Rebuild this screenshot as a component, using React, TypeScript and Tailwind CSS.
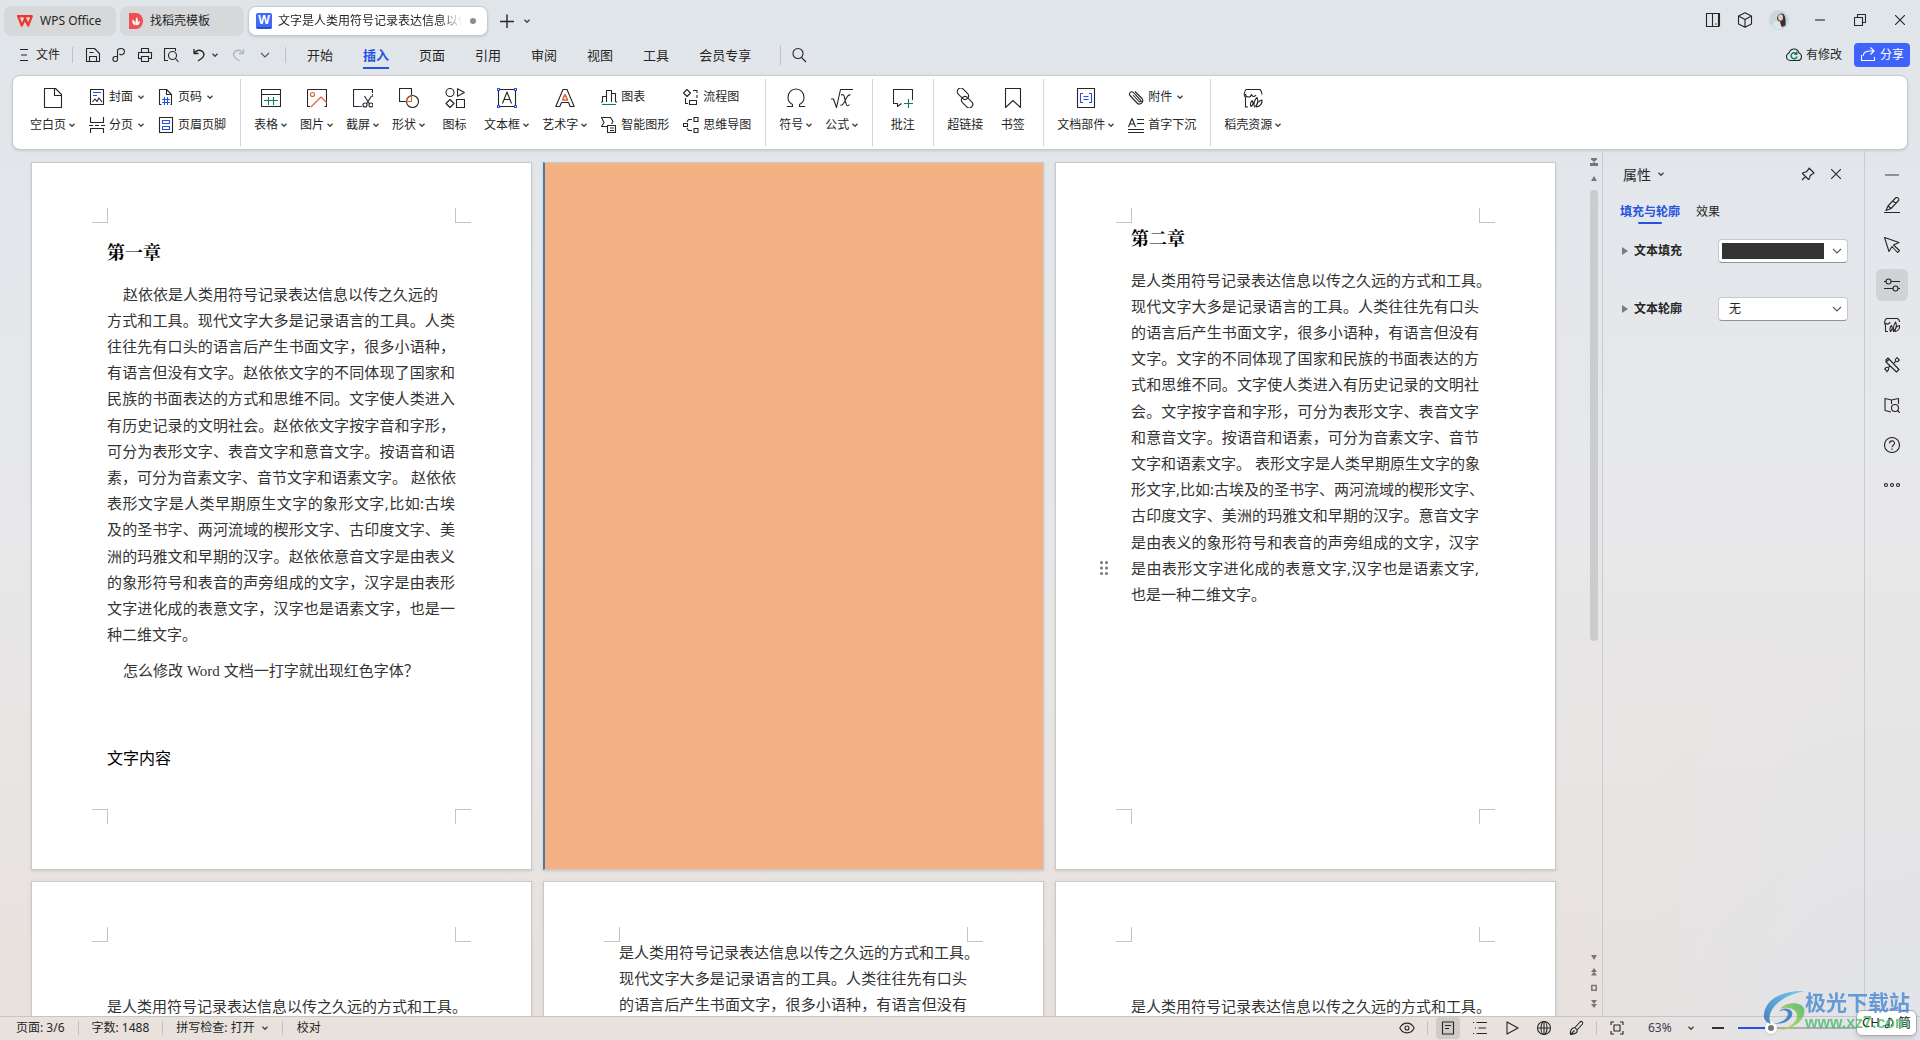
import type { ReactNode } from 'react';

type IconProps = { children: ReactNode; size?: number; className?: string };

// pixel-aligned 1px line icons, drawn on a 20 or 16 grid
function Icon({ children, size = 20, className = '' }: IconProps) {
  return (
    <svg
      width={size}
      height={size}
      viewBox={`0 0 ${size} ${size}`}
      fill="none"
      stroke="currentColor"
      strokeWidth="1.1"
      strokeLinejoin="round"
      className={`shrink-0 ${className}`}
      aria-hidden="true"
    >
      {children}
    </svg>
  );
}

function Caret({ className = '' }: { className?: string }) {
  return (
    <svg width="6" height="6" viewBox="0 0 6 6" fill="none" stroke="#444" strokeWidth="1.4" className={`shrink-0 ${className}`} aria-hidden="true">
      <path d="M0.5 1.8 3 4.2 5.5 1.8" />
    </svg>
  );
}

function Chevron() {
  return (
    <svg width="10" height="6" viewBox="0 0 10 6" fill="none" stroke="#555" strokeWidth="1.1" className="shrink-0" aria-hidden="true">
      <path d="M1 1 5 5 9 1" />
    </svg>
  );
}

const blue = '#2453e0';
const orange = '#d8622a';
const green = '#0f7b5a';

const icons = {
  blank: <Icon><path d="M1.5.5h11l6 6v13h-17zM11.5.5v7h7" /></Icon>,
  table: <Icon><path d="M.5 1.5h19v17H.5zM.5 6.5h19" /><path stroke={green} d="M3 12.5h14M7.5 9v8M12.5 9v8" /></Icon>,
  picture: <Icon><path d="M.5 1.5h19v17h-2M3 18.5H.5v-17" /><path stroke={orange} d="m4 19 10-10 6 6" /><circle stroke={orange} cx="5.5" cy="6.5" r="2" /></Icon>,
  screenshot: <Icon><path d="M6 18.5H.5v-17h19V5" /><path stroke={blue} d="M19.5 6v3M6 18.5h3" /><path d="m11.5 8 5 8M18.5 8l-5 8" /><circle cx="12" cy="17" r="2" /><circle cx="18" cy="17" r="2" /></Icon>,
  shape: <Icon><path d="M7 13.5H.5v-13h12V7" /><circle cx="13.5" cy="13.5" r="6" /><path stroke={orange} d="M7.5 13.5h5V7.500c-3 .3-5 3-5 6z" /></Icon>,
  glyphs: <Icon><circle cx="5" cy="4.500" r="4" /><path d="M12.500.8v7.400L19.300 4.500zM5 11.500l4 4-4 4-4-4zM11.500 11.500h8v8h-8z" /></Icon>,
  textbox: <Icon><path d="M3 1.500h14M3 18.500h14M1.500 3v14M18.500 3v14M5.500 15.500 10 4l4.500 11.500M7.200 11.500h5.600" /><g stroke={blue} fill="#fff"><rect x=".5" y=".5" width="2" height="2" /><rect x="17.500" y=".5" width="2" height="2" /><rect x=".5" y="17.500" width="2" height="2" /><rect x="17.500" y="17.500" width="2" height="2" /></g></Icon>,
  wordart: <Icon><path d="M.8 18.500 8 1.500h4l7.200 17h-4L13.500 14.500h-7L4.800 18.500z" /><path stroke={orange} strokeWidth="1.500" d="M10 6.500 12.500 12h-5z" /></Icon>,
  omega: <Icon><path d="M1 18.500h5.500v-2C3.500 15 2 12.500 2 9.500c0-5 3.500-8.500 8-8.500s8 3.500 8 8.500c0 3-1.500 5.500-4.500 7v2H19" /></Icon>,
  formula: <Icon size={24}><path d="M1 13h2.500l3 8.500 4-18H23" /><path d="M11 9c2-1 3 0 3.500 2.500l1.500 6c.5 2.500 2 3 3.500 1M20.500 9c-1.500-.5-2.500.5-3.500 2l-3.500 6.500c-1 1.500-2 2-3 1.500" /></Icon>,
  comment: <Icon><path d="M19.500 12V1.500h-19v14h4v3l4-3" /><path stroke={green} d="M11 15.500h9M15.500 11v9" /></Icon>,
  link: <Icon><g transform="rotate(45 10 10)"><rect x="-1" y="5" width="13" height="7" rx="3.500" /><rect x="8" y="8" width="13" height="7" rx="3.500" /></g></Icon>,
  bookmark: <Icon><path d="M2.500.5h15v19L10 12.500l-7.500 7z" /></Icon>,
  parts: <Icon><path d="M1.500.5h17v19h-17z" /><path stroke={blue} d="M7 5.500H4.500v9H7M13 5.500h2.500v9H13M7.500 8.500h5M7.500 11.500h5" /></Icon>,
  resource: <Icon><path d="M5 19H2.500V9.500C.5 8 1 4 3 1.500h14c1.500 1.500 2 3.500 2 5M2.500 6c0 4 5 4 6 .5C9.500 9 12 9 13 7" /><path d="M8 18.500c-1-2-.5-4 1-6 1.500 2 1 4.500-1 6zM11.500 19c-1-3 0-7 2.500-9.500 1.500 3 .5 7-2.500 9.500zM13.500 19c0-3 2-6 5.500-7 .5 3.500-2 6.500-5.500 7z" /></Icon>,
  cover: <Icon size={16}><path d="M1.500.5h13v15h-13z" /><path stroke={blue} d="M4 3.500h8M4 6.500h4" /><path d="m3.500 13 2.500-3 2 2.500 2-3.500 3 4" /></Icon>,
  pageBreak: <Icon size={16}><path d="M1.500 0v5.500h13V0M0 8.500h4M6 8.500h4M12 8.500h4M1.500 16v-4.500h13V16" /></Icon>,
  pageNumber: <Icon size={16}><path d="M3.500 15.500h-2V.5h7l5 5v10h-1M8.500.5v5h5" /><path stroke={blue} d="M6.500 8v8M9.500 8v8M4 10.500h8M4 13.500h8" /></Icon>,
  headerFooter: <Icon size={16}><path d="M1.500.5h13v15h-13z" /><path stroke={blue} d="M4.500 3.500h7v3h-7zM4.500 9.500h7v3h-7z" /></Icon>,
  chart: <Icon size={16}><path d="M1.500 13V7.500h4V13M5.500 13V1.500h5V13M10.500 13V4.500h4V13M0 13h1.500M14.500 13H16" /><path stroke={green} d="M1 15.500h14" /></Icon>,
  smartArt: <Icon size={16}><path d="M6 9.500H.5L3 5.500.5.5h9l2.500 4-1.500 2.500M6.500 8.500h8v7h-8zM9 11h4M9 13.500h4" /></Icon>,
  flow: <Icon size={16}><path d="M4 .5 7.500 4 4 7.500.5 4zM10 1.500h4V4M14 6v3M6.500 11.500h7v4h-7zM2.500 9v5.500H5" /></Icon>,
  mindMap: <Icon size={16}><path d="M.5 6.500h4v3h-4zM11 .5h4v4h-4zM11 11.500h4v4h-4zM9 2.500H5.500L4 5M4 11l1.500 2.500H9" /></Icon>,
  attach: <Icon size={16}><path d="M14 13 5.500 3.500c-2.500-2-5 .5-3.500 3l7 7.500c3 3 7.500-1 5-4.500L7 2.500M5 6l6 6.500c1 .8 2.200-.2 1.500-1.500L7.500 5.500" /></Icon>,
  dropCap: <Icon size={16}><path d="M.5 10 4 1.500 7.500 10M2 7h4M9 2.500h7M9 6.500h7M0 12.500h16M0 15.500h16" /></Icon>,
};

type Big = { icon: ReactNode; label: string; caret?: boolean };

function BigButton({ icon, label, caret }: Big) {
  return (
    <button className="flex min-w-[33px] flex-col items-center gap-[9px]">
      <span className="flex h-5 items-center">{icon}</span>
      <span className="flex h-4 items-center gap-[3px]">
        {label}
        {caret && <Caret />}
      </span>
    </button>
  );
}

function SmallColumn({ items }: { items: Big[] }) {
  return (
    <div className="ml-px flex flex-col items-start gap-3">
      {items.map((item) => (
        <button key={item.label} className="flex h-4 items-center gap-1">
          {item.icon}
          {item.label}
          {item.caret && <Caret className="ml-px" />}
        </button>
      ))}
    </div>
  );
}

function Group({ children }: { children: ReactNode }) {
  return <div className="flex items-end gap-[13px] border-r border-[#d4d6d9] pr-[14px] pb-[13px] pl-[13px] first:pl-[17px] last:border-r-0">{children}</div>;
}

function Divider({ className = '' }: { className?: string }) {
  return <span className={`w-px shrink-0 bg-[#bfc3c8] ${className}`} />;
}

function TitleBar() {
  return (
    <header className="flex h-[41px] items-start pt-[6px]">
      <div className="flex gap-1 pl-1">
        <button className="flex h-[30px] w-28 items-center gap-[7px] rounded-lg bg-[#d6d8da] pl-[13px]">
          <svg width="16" height="12" viewBox="0 0 16 12" fill="none" stroke="#f0362c" strokeWidth="2.200" strokeLinejoin="round" aria-hidden="true">
            <path d="M0 1.200h6.500M1.200 1.200l3.600 9.300 3.200-6.500 3.200 6.500 3.600-9.300H7l3 6" />
          </svg>
          WPS Office
        </button>
        <button className="flex h-[30px] w-[124px] items-center gap-[7px] rounded-lg bg-[#d6d8da] pl-[9px]">
          <svg width="14" height="16" viewBox="0 0 14 16" aria-hidden="true">
            <path d="M0 0h7a7 8 0 0 1 0 16H0z" fill="#ef4f52" />
            <path d="M6.500 12.500C3.500 11.500 3 9 3.500 6.500c2 1 3 3 3 6zM7 12.500c-1-3.500-.5-6 .8-8.500 1.700 2.500 1.500 5.500-.8 8.500zM7.500 12.500c.3-2.500 1.500-4 3.500-4.500 0 2.500-1.200 4-3.500 4.500z" fill="#fff" />
          </svg>
          找稻壳模板
        </button>
        <button className="flex h-[30px] w-60 items-center rounded-lg border border-[#c9ccd0] bg-white pl-[7px] shadow-sm">
          <span className="flex h-4 w-4 shrink-0 items-center justify-center rounded-[2px] border-b-2 border-[#1b50d0] bg-[#4169f5] text-[12px] leading-none font-bold text-white">W</span>
          <span className="ml-[6px] w-[184px] overflow-hidden text-left whitespace-nowrap [mask-image:linear-gradient(to_right,black_88%,transparent)]">
            文字是人类用符号记录表达信息以传
          </span>
          <span className="ml-2 h-[6px] w-[6px] rounded-full bg-[#8c8c8c]" />
        </button>
      </div>
      <button aria-label="新建标签" className="ml-3 flex h-[30px] items-center">
        <Icon size={14}><path strokeWidth="1.400" d="M0 7.500h14M7 .5v14" /></Icon>
      </button>
      <button aria-label="标签列表" className="ml-[10px] flex h-[30px] items-center"><Caret /></button>
      <div className="ml-auto flex h-7 items-center pr-[15px]">
        <button aria-label="侧栏"><Icon size={16}><path d="M7 14.500H1.500v-13h13v13M7.500 1.500h6v13h-6zM10 12h1.500" /></Icon></button>
        <button aria-label="应用" className="ml-4"><Icon size={16}><path d="M8 .8 14.500 4v8L8 15.200 1.500 12V4zM1.500 4 8 7.500 14.500 4M8 7.500v7.700" /></Icon></button>
        <button aria-label="账户" className="ml-4">
          <svg width="20" height="20" viewBox="0 0 20 20" aria-hidden="true">
            <circle cx="10" cy="10" r="10" fill="#c9d8da" />
            <path d="M8 9c0-3 2-6 5-5.500s4 5 3.500 12l-3.500 1.500z" fill="#3a3035" />
            <ellipse cx="11.500" cy="7.500" rx="2.500" ry="3.200" fill="#ecc9b8" />
            <path d="M3 16c1-4 4-5.500 8-4.500l1.500 7A9 9 0 0 1 3 16z" fill="#dbe7e8" />
          </svg>
        </button>
        <button aria-label="最小化" className="ml-[26px]"><Icon size={10}><path d="M0 5h10" /></Icon></button>
        <button aria-label="还原" className="ml-[29px]"><Icon size={12}><path d="M.5 3.500h8v8h-8zM3.500 3.500v-3h8v8h-3" /></Icon></button>
        <button aria-label="关闭" className="ml-[29px]"><Icon size={10}><path d="m0 0 10 10M10 0 0 10" /></Icon></button>
      </div>
    </header>
  );
}

const menuTabs = ['开始', '插入', '页面', '引用', '审阅', '视图', '工具', '会员专享'];

function MenuBar() {
  return (
    <nav className="flex h-7 items-center">
      <button className="ml-5 flex items-center gap-2">
        <Icon size={8} className="overflow-visible"><path d="M0-1.500h8M1 4h6M0 9.500h8" /></Icon>
        文件
      </button>
      <Divider className="ml-3 h-4" />
      <div className="flex items-center gap-[10px] pl-3">
        <button aria-label="保存"><Icon size={16}><path d="M1.500 1.500h8l5 5v8h-13zM4.500 14.500v-5h7v5M4.500 5.500h4" /></Icon></button>
        <button aria-label="输出"><Icon size={16}><path d="M6.500 9.500H4.500c-3.500 0-3.500 5 0 5 1.500 0 2-1 2-2.500v-8c0-3.500 7-3.500 7 .5 0 3-3.500 4-5 2.500" /></Icon></button>
        <button aria-label="打印"><Icon size={16}><path d="M4.500 5V1.500h7V5M4.500 11.500h-3V5.500h13v6h-3M4.500 9.500h7v5h-7z" /></Icon></button>
        <button aria-label="打印预览"><Icon size={16}><path d="M5 13.500H1.500v-12h11V4" /><circle cx="9.500" cy="8.500" r="4" /><path d="m12.500 11.500 3 3.500" /></Icon></button>
      </div>
      <button aria-label="撤销" className="ml-[13px]"><Icon size={14}><path strokeWidth="1.300" d="M2 1v4.500h4.500M2.500 5C5 1.500 9 1.500 11 4s.5 5-1.500 6.500L6 13" /></Icon></button>
      <Caret className="ml-[6px]" />
      <button aria-label="恢复" className="ml-[14px] text-[#b3b6ba]"><Icon size={14}><path strokeWidth="1.300" d="M11.500 1v4.500H7M11 5C8.500 1.500 4.500 1.500 2.500 4s-.5 5 1.500 6.500L7.500 13" /></Icon></button>
      <button aria-label="更多" className="ml-[14px]"><Chevron /></button>
      <Divider className="ml-[15px] h-4" />
      <div className="ml-[21px] flex gap-[30px] text-[13px]">
        {menuTabs.map((tab) => (
          <button
            key={tab}
            className={tab === '插入' ? 'h-7 border-b-2 border-[#2453e0] pt-1 font-bold text-[#2453e0]' : 'h-7 border-b-2 border-transparent pt-1'}
          >
            {tab}
          </button>
        ))}
      </div>
      <Divider className="ml-[29px] h-5" />
      <button aria-label="搜索" className="ml-[10px]"><Icon size={16}><circle cx="7" cy="6.500" r="5" /><path d="m10.500 10.500 4.500 4.500" /></Icon></button>
      <div className="ml-auto flex items-center pr-[10px]">
        <button className="flex items-center gap-1">
          <Icon size={16}>
            <path d="M4.500 13.500C1.500 13.500.5 11.500.5 9.500s1-3 2.500-3.500C4 3 6 2 8 2s4 1 5 4c1.500.5 2.500 1.500 2.500 3.500s-1 4-4 4z" />
            <path stroke={green} strokeWidth="1.400" d="M10.500 7A3 3 0 1 0 11 9.500M10.800 4.800v2.500H8.500" />
          </Icon>
          有修改
        </button>
        <button className="ml-3 flex h-6 w-14 items-center gap-1 rounded bg-[#3d63fb] pl-[6px] text-white">
          <Icon size={16}><path d="M1.500 8v5.500h13V10M3 9c.5-3 3-5 7-5h4M10.500.5 14 4l-3.500 3.500" /></Icon>
          分享
        </button>
      </div>
    </nav>
  );
}

function Ribbon() {
  return (
    <section className="mx-3 mt-[6px] flex h-[75px] rounded-lg border border-[#c9ccd0] bg-white py-[3px] shadow">
      <Group>
        <BigButton icon={icons.blank} label="空白页" caret />
        <SmallColumn items={[{ icon: icons.cover, label: '封面', caret: true }, { icon: icons.pageBreak, label: '分页', caret: true }]} />
        <SmallColumn items={[{ icon: icons.pageNumber, label: '页码', caret: true }, { icon: icons.headerFooter, label: '页眉页脚' }]} />
      </Group>
      <Group>
        <BigButton icon={icons.table} label="表格" caret />
        <BigButton icon={icons.picture} label="图片" caret />
        <BigButton icon={icons.screenshot} label="截屏" caret />
        <BigButton icon={icons.shape} label="形状" caret />
        <BigButton icon={icons.glyphs} label="图标" />
        <BigButton icon={icons.textbox} label="文本框" caret />
        <BigButton icon={icons.wordart} label="艺术字" caret />
        <SmallColumn items={[{ icon: icons.chart, label: '图表' }, { icon: icons.smartArt, label: '智能图形' }]} />
        <SmallColumn items={[{ icon: icons.flow, label: '流程图' }, { icon: icons.mindMap, label: '思维导图' }]} />
      </Group>
      <Group>
        <BigButton icon={icons.omega} label="符号" caret />
        <BigButton icon={icons.formula} label="公式" caret />
      </Group>
      <Group>
        <BigButton icon={icons.comment} label="批注" />
      </Group>
      <Group>
        <BigButton icon={icons.link} label="超链接" />
        <BigButton icon={icons.bookmark} label="书签" />
      </Group>
      <Group>
        <BigButton icon={icons.parts} label="文档部件" caret />
        <SmallColumn items={[{ icon: icons.attach, label: '附件', caret: true }, { icon: icons.dropCap, label: '首字下沉' }]} />
      </Group>
      <Group>
        <BigButton icon={icons.resource} label="稻壳资源" caret />
      </Group>
    </section>
  );
}

const chapterOne = [
  '赵依依是人类用符号记录表达信息以传之久远的',
  '方式和工具。现代文字大多是记录语言的工具。人类',
  '往往先有口头的语言后产生书面文字，很多小语种，',
  '有语言但没有文字。赵依依文字的不同体现了国家和',
  '民族的书面表达的方式和思维不同。文字使人类进入',
  '有历史记录的文明社会。赵依依文字按字音和字形，',
  '可分为表形文字、表音文字和意音文字。按语音和语',
  '素，可分为音素文字、音节文字和语素文字。 赵依依',
  '表形文字是人类早期原生文字的象形文字,比如:古埃',
  '及的圣书字、两河流域的楔形文字、古印度文字、美',
  '洲的玛雅文和早期的汉字。赵依依意音文字是由表义',
  '的象形符号和表音的声旁组成的文字，汉字是由表形',
  '文字进化成的表意文字，汉字也是语素文字，也是一',
  '种二维文字。',
];

const chapterTwo = [
  '是人类用符号记录表达信息以传之久远的方式和工具。',
  '现代文字大多是记录语言的工具。人类往往先有口头',
  '的语言后产生书面文字，很多小语种，有语言但没有',
  '文字。文字的不同体现了国家和民族的书面表达的方',
  '式和思维不同。文字使人类进入有历史记录的文明社',
  '会。文字按字音和字形，可分为表形文字、表音文字',
  '和意音文字。按语音和语素，可分为音素文字、音节',
  '文字和语素文字。 表形文字是人类早期原生文字的象',
  '形文字,比如:古埃及的圣书字、两河流域的楔形文字、',
  '古印度文字、美洲的玛雅文和早期的汉字。意音文字',
  '是由表义的象形符号和表音的声旁组成的文字，汉字',
  '是由表形文字进化成的表意文字,汉字也是语素文字,',
  '也是一种二维文字。',
];

function lineClass(line: string, i: number) {
  const leading = i % 5 === 4 ? 'leading-[27px]' : 'leading-[26px]';
  // only full lines are set flush to both margins
  const align = line.length > 21 ? '[text-align-last:justify]' : '';
  return `relative whitespace-nowrap ${leading} ${align}`;
}

function Lines({ lines, indent = false, handleAt = -1 }: { lines: string[]; indent?: boolean; handleAt?: number }) {
  return (
    <>
      {lines.map((line, i) => (
        <p key={i} className={`${lineClass(line, i)} ${indent && i === 0 ? 'pl-4' : ''}`}>
          {i === handleAt && (
            <svg width="8" height="14" viewBox="0 0 8 14" fill="#777" className="absolute top-[6px] -left-[31px]" aria-hidden="true">
              <circle cx="1.500" cy="1.500" r="1.500" /><circle cx="6.500" cy="1.500" r="1.500" />
              <circle cx="1.500" cy="7" r="1.500" /><circle cx="6.500" cy="7" r="1.500" />
              <circle cx="1.500" cy="12.500" r="1.500" /><circle cx="6.500" cy="12.500" r="1.500" />
            </svg>
          )}
          {line}
        </p>
      ))}
    </>
  );
}

function Page({ children, className = '' }: { children?: ReactNode; className?: string }) {
  return (
    <article className={`relative h-[708px] w-[501px] shrink-0 border border-[#c9cacc] bg-white pr-[76px] pl-[75px] text-[15px] text-[#333] shadow-sm ${className}`}>
      <span className="absolute top-[45px] left-[60px] h-[15px] w-4 border-r border-b border-[#c4c4c4]" />
      <span className="absolute top-[45px] right-[60px] h-[15px] w-4 border-b border-l border-[#c4c4c4]" />
      <span className="absolute bottom-[45px] left-[60px] h-[15px] w-4 border-t border-r border-[#c4c4c4]" />
      <span className="absolute right-[60px] bottom-[45px] h-[15px] w-4 border-t border-l border-[#c4c4c4]" />
      {children}
    </article>
  );
}

const headingClass = "text-[18px] leading-6 font-bold text-black font-['Liberation_Serif','Noto_Serif_CJK_SC','Noto_Sans_CJK_SC',serif]";

function Pages() {
  return (
    <div className="flex min-w-0 flex-1 flex-wrap content-start gap-[11px] overflow-hidden pt-[12px] pl-[31px]">
      <Page className="pt-[78px]">
        <h2 className={headingClass}>第一章</h2>
        <div className="pt-4"><Lines lines={chapterOne} indent /></div>
        <p className="mt-[10px] pl-4 leading-[26px]">
          怎么修改 <span className="font-['Liberation_Serif',serif]">Word</span> 文档一打字就出现红色字体？
        </p>
        <p className="mt-[62px] text-[16px] leading-6 text-black">文字内容</p>
      </Page>
      <article aria-label="彩色页" className="h-[708px] w-[501px] shrink-0 border border-l-2 border-[#c9cacc] border-l-[#4a7ba5] bg-[#f4b183] shadow-sm" />
      <Page className="pt-16">
        <h2 className={headingClass}>第二章</h2>
        <div className="pt-4"><Lines lines={chapterTwo} handleAt={11} /></div>
      </Page>
      <Page className="pt-[111px]"><Lines lines={chapterTwo.slice(0, 1)} /></Page>
      <Page className="pt-[57px]"><Lines lines={chapterTwo.slice(0, 3)} /></Page>
      <Page className="pt-[111px]"><Lines lines={chapterTwo.slice(0, 1)} /></Page>
    </div>
  );
}

function ScrollRail() {
  return (
    <div className="flex w-4 shrink-0 flex-col items-center text-[#777]">
      <svg width="8" height="8" viewBox="0 0 8 8" fill="currentColor" className="mt-2 shrink-0" aria-hidden="true">
        <path d="M1 0h6v1.500L4.500 3.500v1.500H8V8H0V5h3.500V3.500L1 1.500z" />
      </svg>
      <svg width="6" height="5" viewBox="0 0 6 5" fill="currentColor" className="mt-[10px] shrink-0" aria-hidden="true"><path d="M3 0 6 5H0z" /></svg>
      <div className="mt-[9px] w-2 flex-[450] rounded-full bg-[#cbccce]" />
      <div className="flex-[314]" />
      <div className="flex flex-col items-center gap-2 pb-2">
        <svg width="6" height="5" viewBox="0 0 6 5" fill="currentColor" aria-hidden="true"><path d="M3 5 6 0H0z" /></svg>
        <svg width="6" height="8" viewBox="0 0 6 8" fill="currentColor" aria-hidden="true"><path d="M3 0 6 4H0zM3 3.500 6 7.500H0z" /></svg>
        <svg width="6" height="8" viewBox="0 0 6 8" fill="none" stroke="currentColor" strokeWidth="1.500" aria-hidden="true"><rect x=".8" y="1.500" width="4.400" height="4.800" /></svg>
        <svg width="6" height="8" viewBox="0 0 6 8" fill="currentColor" aria-hidden="true"><path d="M3 4 6 0H0zM3 8l3-4H0z" /></svg>
      </div>
    </div>
  );
}

function PropertyPanel() {
  return (
    <aside className="w-[262px] shrink-0 border-l border-[#c9cbcf] pl-[17px]">
      <div className="mt-3 flex h-6 items-center pr-[23px]">
        <h3 className="ml-[3px] text-[14px]">属性</h3>
        <Caret className="ml-[7px]" />
        <button aria-label="固定" className="ml-auto"><Icon size={14}><path d="m8 1 5 5-1.500 1-1 .5L9 9l-.5 2.500L7.500 12.500l-6-6 1-1L5 5l2-2zM4.500 9.500 1 13" /></Icon></button>
        <button aria-label="关闭" className="ml-4"><Icon size={10}><path d="m0 0 10 10M10 0 0 10" /></Icon></button>
      </div>
      <div className="mt-4 flex gap-4">
        <button className="flex flex-col items-center text-[#2453e0]">
          <span className="leading-5 font-bold">填充与轮廓</span>
          <span className="h-[2px] w-6 rounded bg-[#2453e0]" />
        </button>
        <button className="h-5 leading-5">效果</button>
      </div>
      <div className="mt-[15px] flex h-[23px] items-center">
        <svg width="6" height="8" viewBox="0 0 6 8" fill="#7d7d7d" className="ml-[2px]" aria-hidden="true"><path d="m0 0 6 4-6 4z" /></svg>
        <label htmlFor="fill" className="ml-[6px] w-[84px] font-bold">文本填充</label>
        <div className="relative">
          <select id="fill" className="block h-6 w-[130px] appearance-none rounded border border-b-[#909398] border-[#c5c8cc] bg-white">
            <option aria-label="深灰" value="#333333"></option>
          </select>
          <span className="pointer-events-none absolute inset-[4px] right-6 bg-[#333]" />
          <span className="pointer-events-none absolute top-[9px] right-[6px]"><Chevron /></span>
        </div>
      </div>
      <div className="mt-[35px] flex h-[23px] items-center">
        <svg width="6" height="8" viewBox="0 0 6 8" fill="#7d7d7d" className="ml-[2px]" aria-hidden="true"><path d="m0 0 6 4-6 4z" /></svg>
        <label htmlFor="outline" className="ml-[6px] w-[84px] font-bold">文本轮廓</label>
        <div className="relative">
          <select id="outline" className="block h-6 w-[130px] appearance-none rounded border border-b-[#909398] border-[#c5c8cc] bg-white pl-[10px]">
            <option>无</option>
          </select>
          <span className="pointer-events-none absolute top-[9px] right-[6px]"><Chevron /></span>
        </div>
      </div>
    </aside>
  );
}

const tools: { label: string; icon: ReactNode }[] = [
  { label: '画笔', icon: <path d="M0 15.500h16M2 13.500 4 9l7.500-8c1.500-1.500 4.500 1 3 2.500L7 11.500zM4 9l3 2.500M9 4l3 2.500" /> },
  { label: '选择', icon: <path d="M.5.5 15 5.500 9.500 8l6 5.500-2 2L8 9.500l-3 5z" /> },
  { label: '属性', icon: <><circle cx="4.500" cy="4.500" r="2.500" /><circle cx="11.500" cy="11.500" r="2.500" /><path d="M0 4.500h2M7 4.500h9M0 11.500h9M14 11.500h2" /></> },
  { label: '资源', icon: <path d="M4 14.500H1.500V8C0 6.500.5 3 2.500 1.500h11c1.500 1 2 2 2 3.500M1.500 6c2 2 4 1 4.500-1M6.500 14.500C5.500 12 6 10 7.500 8.500c1.200 2 .8 4.500-1 6zM9.500 14.500C9 11 9.500 8 11.500 5c1.500 3 .5 7-2 9.500zM11 14.500c0-3 2-5.500 4.500-6 .5 3-1.500 5.500-4.500 6z" /> },
  { label: '工具箱', icon: <><path d="m2 3 2-2 11 11.500-2.500 2.500L2 5zM2 5l3-2.500" /><circle cx="13" cy="3" r="1.700" /><circle cx="3" cy="12" r="1.700" /><path d="m11.500 4.500-1.500 1.500M4.500 10.500 6 9M13 0v1M16 3h-1M3 14v1.500M0 12h1" /></> },
  { label: '查找', icon: <><path d="M7 15 1 13.500v-12L7.500 3v4M7.500 3l7-1.500V7" /><circle cx="11" cy="11" r="3.500" /><path d="m13.500 13.500 2.500 2.500" /></> },
  { label: '帮助', icon: <><circle cx="8" cy="8" r="7.500" /><path d="M5.500 6.500C5.500 3 10.500 3 10.500 6.200c0 2-2.500 2-2.500 4M8 11.500v1.500" /></> },
  { label: '更多', icon: <><circle cx="2" cy="8" r="1.500" /><circle cx="8" cy="8" r="1.500" /><circle cx="14" cy="8" r="1.500" /></> },
];

function ToolRail() {
  return (
    <div className="flex w-14 shrink-0 flex-col items-center gap-2 border-l border-[#c9cbcf] pt-6 pr-px">
      <span className="-mb-px h-[2px] w-[14px] bg-[#8e9094]" />
      <div className="mt-[6px] flex flex-col gap-2">
        {tools.map((tool) => (
          <button
            key={tool.label}
            aria-label={tool.label}
            className={`flex h-8 w-8 items-center justify-center rounded-md ${tool.label === '属性' ? 'bg-[#d0d2d5]' : ''}`}
          >
            <Icon size={16}>{tool.icon}</Icon>
          </button>
        ))}
      </div>
    </div>
  );
}

function StatusBar() {
  return (
    <footer className="flex h-6 shrink-0 items-center border-t border-[#c6c4c4] pb-[2px] pl-4 leading-4">
      <span>页面: 3/6</span>
      <Divider className="mx-[13px] h-[14px]" />
      <span>字数: 1488</span>
      <Divider className="mx-[13px] h-[14px]" />
      <button className="flex items-center gap-[7px]">拼写检查: 打开 <Caret /></button>
      <Divider className="mx-[14px] h-[14px]" />
      <button>校对</button>
      <div className="ml-auto flex items-center pr-[50px]">
        <button aria-label="护眼" className="mr-3"><Icon size={16}><path d="M.8 8C4 1.500 12 1.500 15.200 8 12 14.500 4 14.500.8 8z" /><circle cx="8" cy="8" r="2" /></Icon></button>
        <Divider className="h-[14px]" />
        <button aria-label="页面视图" className="ml-2 flex h-[22px] w-6 items-center justify-center rounded bg-[#d1cbc7]"><Icon size={14}><path d="M1.500 1h11v12h-11zM4 4.500h6M4 7.500h4" /></Icon></button>
        <button aria-label="大纲" className="ml-3"><Icon size={16}><path d="M1 2.500h1M4.500 2.500H15M3 8h1M6.500 8H14M1 13.500h1M4.500 13.500H15" /></Icon></button>
        <button aria-label="阅读" className="ml-4"><Icon size={16}><path d="m3 2 11 6-11 6z" /></Icon></button>
        <button aria-label="网页" className="ml-4"><Icon size={16}><circle cx="8" cy="8" r="6.500" /><ellipse cx="8" cy="8" rx="3" ry="6.500" /><path d="M1.500 8h13M8 1.500v13" /></Icon></button>
        <button aria-label="书写" className="ml-4"><Icon size={16}><path d="M7 7.500 12 2c1.500-1.500 3.500.5 2.500 2L9 10M7 7.500 9 10c1 2.500-1.500 4-6.500 4.500C2 11 3 8 7 7.500zM2.500 14.500l4-4" /></Icon></button>
        <Divider className="ml-3 h-[14px]" />
        <button aria-label="适应窗口" className="mr-[23px] ml-3"><Icon size={16}><path d="M2 5V2h3M11 2h3v3M14 11v3h-3M5 14H2v-3M5 5h6v6H5z" /></Icon></button>
        <button className="flex w-[46px] items-center justify-between text-[#3b4254]">63% <Caret /></button>
        <button aria-label="缩小" className="ml-[18px] h-[2px] w-3 bg-[#333]" />
        <input
          type="range"
          aria-label="缩放"
          min="0"
          max="200"
          defaultValue="45"
          className="ml-[14px] h-3 w-[132px] appearance-none bg-[linear-gradient(#2453e0,#2453e0),linear-gradient(#adadad,#adadad)] bg-[length:25%_2px,100%_2px] bg-left bg-no-repeat [&::-webkit-slider-thumb]:h-3 [&::-webkit-slider-thumb]:w-3 [&::-webkit-slider-thumb]:appearance-none [&::-webkit-slider-thumb]:rounded-full [&::-webkit-slider-thumb]:border-[3px] [&::-webkit-slider-thumb]:border-white [&::-webkit-slider-thumb]:bg-[#777] [&::-webkit-slider-thumb]:shadow"
        />
      </div>
    </footer>
  );
}

// site mark and input-method badge floating over the corner
function CornerOverlay() {
  return (
    <>
      <div className="pointer-events-none absolute right-[3px] bottom-1 z-10 flex h-[26px] w-[61px] items-center justify-center gap-[3px] rounded-md border border-[#aaa] bg-white text-[13px] shadow-md">
        <span>CH</span>
        <Icon size={12}><path d="M6 1v7M6 1c4 1 5 5 2 8M6 8c-2-1-4 0-4 1.500s3 2 4 0z" /></Icon>
        <span>简</span>
      </div>
      <div className="pointer-events-none absolute right-[10px] bottom-2 z-20 flex items-center opacity-75">
        <svg width="42" height="42" viewBox="0 0 42 42" aria-hidden="true">
          <defs>
            <linearGradient id="swirlBlue" x1="1" y1="0" x2="0" y2="1"><stop offset="0" stopColor="#4fc3f0" /><stop offset="1" stopColor="#1560b8" /></linearGradient>
            <linearGradient id="swirlGreen" x1="1" y1="0" x2="0" y2="1"><stop offset="0" stopColor="#2fae54" /><stop offset="1" stopColor="#d8e52c" /></linearGradient>
          </defs>
          <path d="M42 1C22 0 3 8 1 24c-1 6 3 9 7 10-3-5-2-14 8-22C23 6 32 3 42 1z" fill="url(#swirlBlue)" />
          <path d="M9 33c8 1 15-3 16-9 0-4-6-5-9-2 2-4 10-5 13 0 2 6-7 14-20 11z" fill="#1e68bd" />
          <path d="M17 19c5-7 20-8 24-1 3 10-9 22-27 23 12-3 20-9 20-15 0-7-9-10-17-7z" fill="url(#swirlGreen)" />
        </svg>
        <div className="flex flex-col whitespace-nowrap">
          <span className="text-[21px] leading-[24px] font-bold text-[#3b82d0]">极光下载站</span>
          <span className="text-[16px] leading-[18px] font-bold text-[#3fb765] font-['Liberation_Sans',sans-serif]">www.xz7.com</span>
        </div>
      </div>
    </>
  );
}

export default function App() {
  return (
    <div className="relative flex h-screen flex-col overflow-hidden bg-[radial-gradient(circle_at_100%_100%,#e1e4ea,transparent_18%),linear-gradient(to_bottom,#e0e5ea_0%,#e4e7eb_25%,#e8e8ea_50%,#e8e4e2_80%,#e8e1dc_100%)] text-[12px] text-[#262626] font-['Noto_Sans','Noto_Sans_CJK_SC',sans-serif]">
      <TitleBar />
      <MenuBar />
      <Ribbon />
      <main className="flex min-h-0 flex-1">
        <Pages />
        <ScrollRail />
        <PropertyPanel />
        <ToolRail />
      </main>
      <StatusBar />
      <CornerOverlay />
    </div>
  );
}
